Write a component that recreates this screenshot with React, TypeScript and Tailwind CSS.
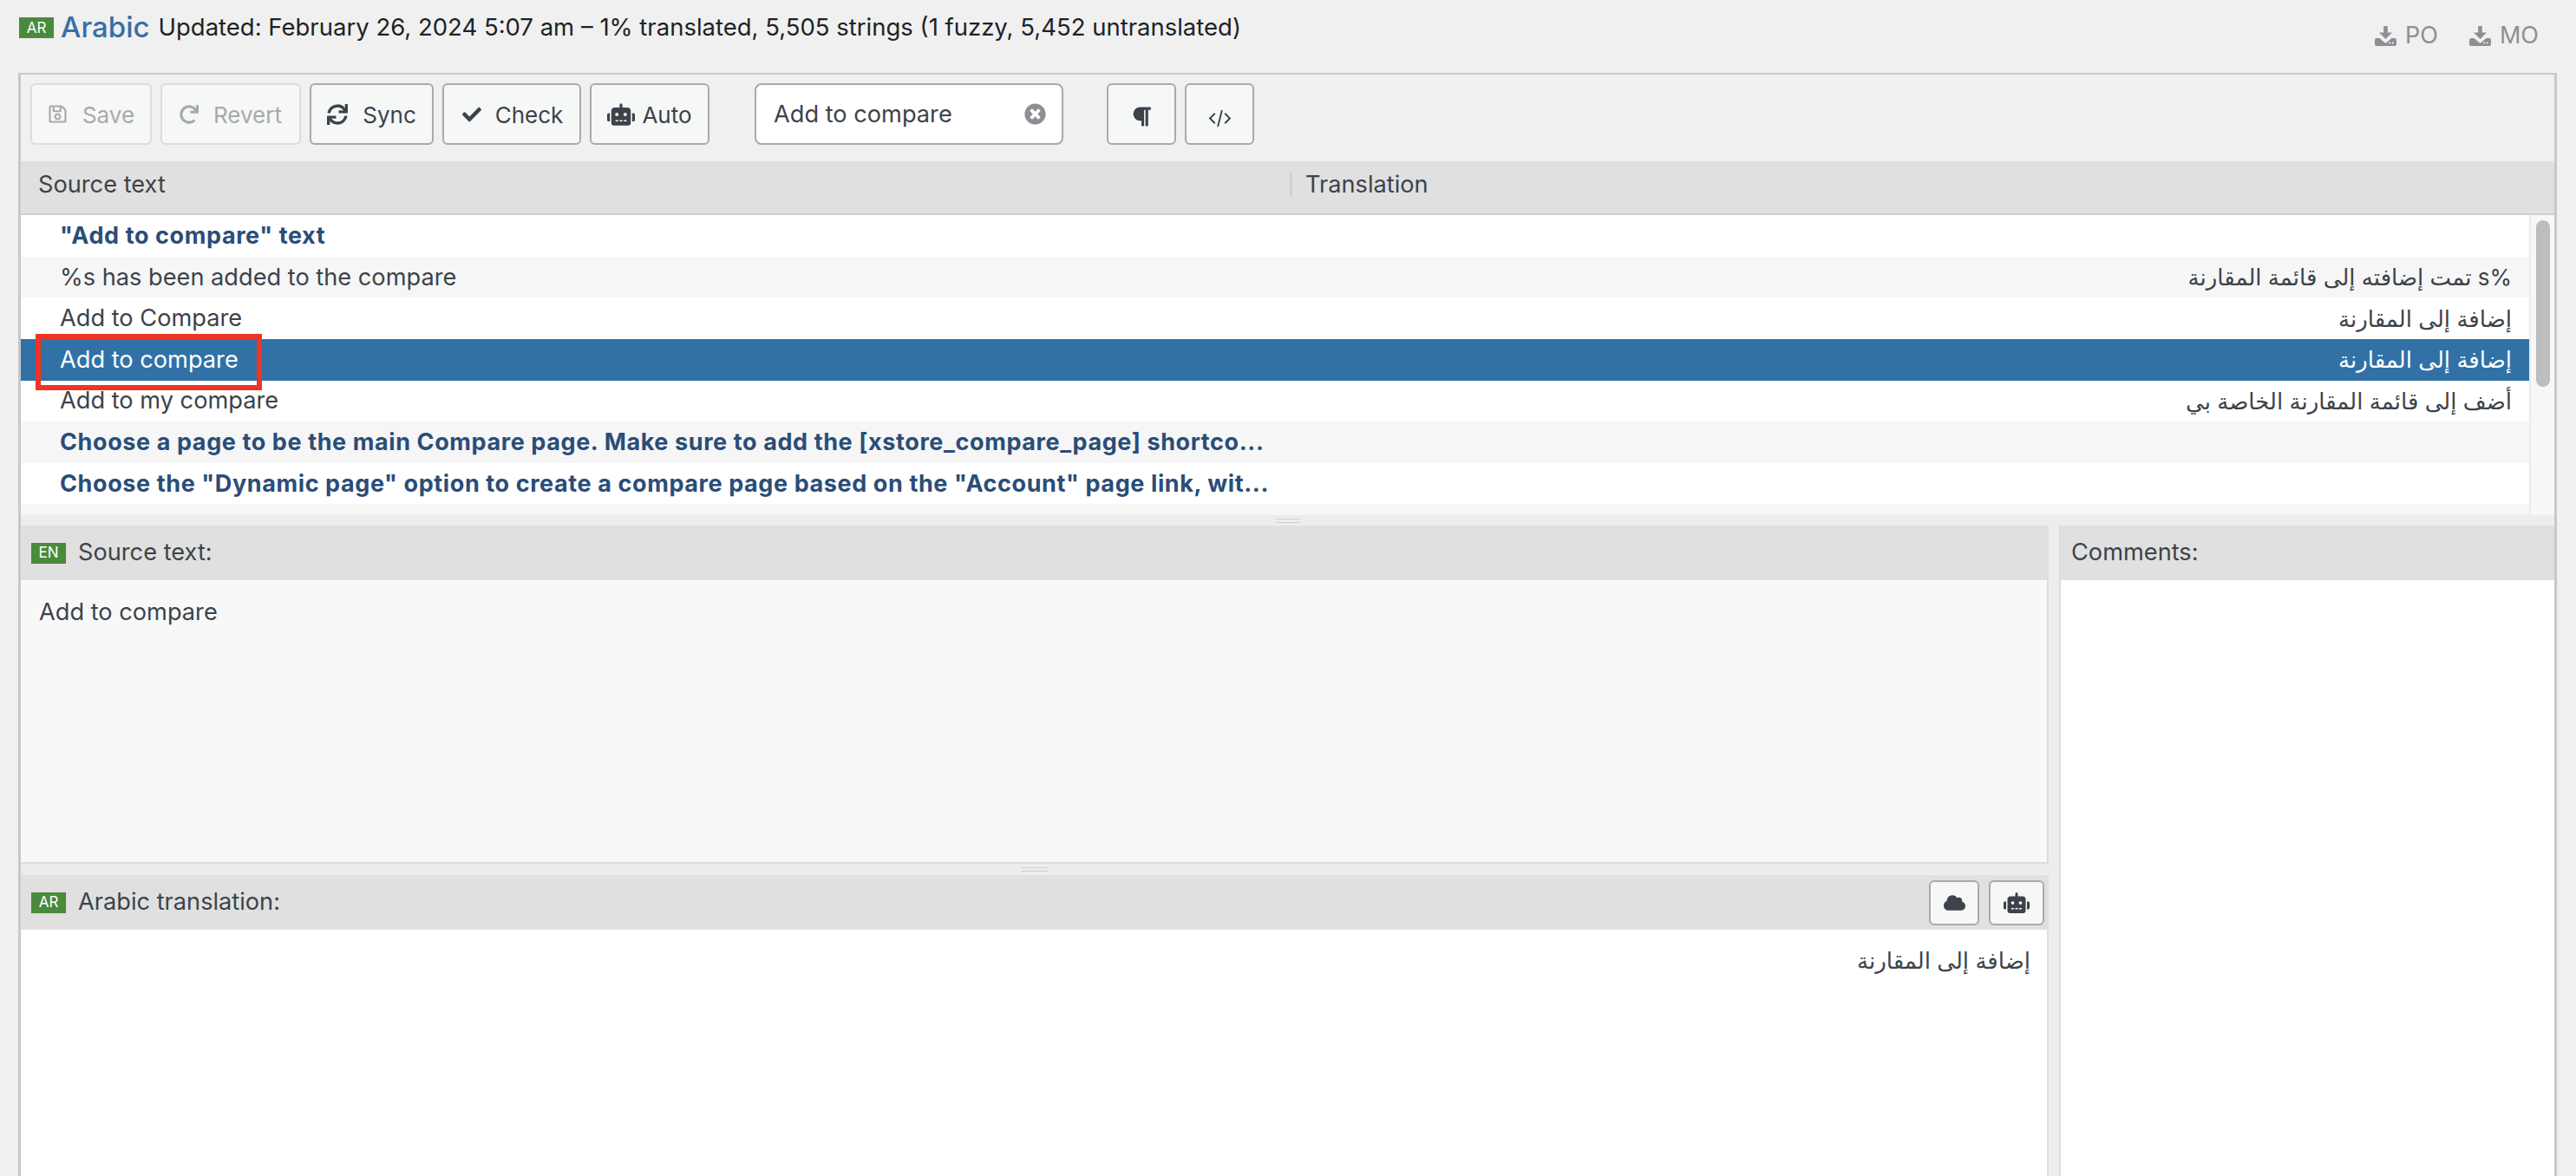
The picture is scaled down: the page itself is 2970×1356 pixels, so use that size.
import { FaRegSave, FaRedo, FaSync, FaCheck, FaRobot, FaParagraph, FaCloud, FaTimesCircle } from 'react-icons/fa';

const FONT = 'font-[Inter,"DejaVu_Sans",sans-serif]';

const rows = [
  { src: '"Add to compare" text', ar: '', bold: true },
  { src: '%s has been added to the compare', ar: '%s تمت إضافته إلى قائمة المقارنة' },
  { src: 'Add to Compare', ar: 'إضافة إلى المقارنة' },
  { src: 'Add to compare', ar: 'إضافة إلى المقارنة', active: true },
  { src: 'Add to my compare', ar: 'أضف إلى قائمة المقارنة الخاصة بي' },
  { src: 'Choose a page to be the main Compare page. Make sure to add the [xstore_compare_page] shortco...', ar: '', bold: true },
  { src: 'Choose the "Dynamic page" option to create a compare page based on the "Account" page link, wit...', ar: '', bold: true },
  { src: 'Choose whether to display the compare icon on the single product page and the product archives...', ar: '', bold: true },
];

function CodeIcon() {
  return (
    <svg viewBox="0 0 28 22" className="w-[27px] h-[21px] mt-[9px]" fill="none" stroke="currentColor" strokeWidth="2">
      <path d="M8 5 2 11l6 6M20 5l6 6-6 6M16.500 1l-5 20" />
    </svg>
  );
}

function DownloadIcon() {
  return (
    <svg viewBox="0 0 25 23" className="w-[25px] h-[23px]" fill="currentColor">
      <path d="M10.200 0h4.600v7.500h5.200l-7.500 7.500L5 7.500h5.200z" />
      <path fillRule="evenodd" d="M2 14h3.500l7 6 7-6H23a2 2 0 0 1 2 2v5a2 2 0 0 1-2 2H2a2 2 0 0 1-2-2v-5a2 2 0 0 1 2-2zm16 5.500a1 1 0 1 0 0 .01zm3.500 0a1 1 0 1 0 0 .01z" />
    </svg>
  );
}

function ToolButton({ icon, label, off, w, gap = 'gap-[17px]' }: any) {
  return (
    <button
      className={`${w} ${gap} h-[71px] shrink-0 flex items-center justify-center rounded-[6px] border-2 bg-[#f6f7f7] text-[26px] ${
        off ? 'border-[#dcdcde] text-[#a7aaad]' : 'border-[#a9a9a9] text-[#3c434a]'
      }`}
    >
      {icon}
      {label && <span className="mt-[2px]">{label}</span>}
    </button>
  );
}

function Badge({ code }: { code: string }) {
  return (
    <span className="w-[40px] h-[24px] shrink-0 flex items-center justify-center bg-[#4a8a3c] text-white text-[17px] leading-none">
      {code}
    </span>
  );
}

function PaneHeader({ badge, label, children }: any) {
  return (
    <div className="h-[63px] shrink-0 flex items-center bg-[#e0e0e0] pl-[12px] pr-[3px] text-[#3c434a] text-[27.200px]">
      {badge && <Badge code={badge} />}
      <span className={badge ? 'ml-[14px]' : ''}>{label}</span>
      {children}
    </div>
  );
}

function Row({ row, index }: any) {
  const bg = row.active ? 'bg-[#3171a6]' : index % 2 ? 'bg-[#f6f6f6]' : 'bg-white';
  const color = row.active ? 'text-white' : 'text-[#3c434a]';
  return (
    <div className={`relative h-[47.650px] shrink-0 flex items-center ${bg} ${color}`}>
      <div className={`w-[1464px] shrink-0 pl-[45px] pt-[1px] whitespace-nowrap text-[27.200px] ${row.bold ? 'font-bold text-[27px] tracking-[0.6px] text-[#2a4d78]' : ''}`}>
        {row.src}
      </div>
      <div dir="rtl" className="flex-1 pr-[20px] text-[26px]">
        {row.ar}
      </div>
      {row.active && (
        <div className="absolute z-10 left-[17px] top-[-6px] w-[261px] h-[65px] border-[6px] border-[#ee3524]" />
      )}
    </div>
  );
}

export default function App() {
  return (
    <div className={`w-[2970px] h-[1356px] overflow-hidden bg-[#f0f0f0] ${FONT}`}>
      <div className="h-[84px] flex pl-[22px] pr-[43px]">
        <div className="flex items-center h-[64px] text-[#1d2327] text-[27.500px]">
          <Badge code="AR" />
          <span className="ml-[8px] mr-[10px] text-[33px] text-[#3a6ea5] font-medium">Arabic</span>
          <span>Updated: February 26, 2024 5:07 am – 1% translated, 5,505 strings (1 fuzzy, 5,452 untranslated)</span>
        </div>
        <div className="ml-auto flex items-center gap-[36px] h-[82px] text-[#8c8f94] text-[27px]">
          <span className="flex items-center gap-[10px]"><DownloadIcon />PO</span>
          <span className="flex items-center gap-[10px]"><DownloadIcon />MO</span>
        </div>
      </div>

      <div className="ml-[21px] mr-[22px] h-[1272px] border-x-[3px] border-t-[2px] border-[#c8c8c8] flex flex-col">
        <div className="h-[100px] shrink-0 flex items-start pl-[11px] pt-[10px] gap-[10px]">
          <ToolButton off w="w-[140px]" label="Save" icon={<FaRegSave className="w-[23px] h-[23px]" />} />
          <ToolButton off w="w-[162px]" label="Revert" icon={<FaRedo className="w-[22px] h-[22px]" />} />
          <ToolButton w="w-[143px]" label="Sync" icon={<FaSync className="w-[24px] h-[24px]" />} />
          <ToolButton w="w-[160px]" gap="gap-[14px]" label="Check" icon={<FaCheck className="w-[26px] h-[22px]" />} />
          <ToolButton w="w-[138px]" gap="gap-[8px]" label="Auto" icon={<FaRobot className="w-[32px] h-[26px]" />} />
          <div className="ml-[42px] w-[356px] h-[71px] shrink-0 flex items-center justify-between rounded-[8px] border-2 border-[#a9a9a9] bg-white pl-[20px] pr-[18px] text-[27.200px] text-[#3c434a]">
            <span className="mt-[2px]">Add to compare</span>
            <FaTimesCircle className="w-[25px] h-[25px] text-[#8c8f94]" />
          </div>
          <div className="w-[30px]" />
          <ToolButton w="w-[80px]" icon={<FaParagraph className="w-[22px] h-[25px] mt-[5px]" />} />
          <ToolButton w="w-[80px]" icon={<CodeIcon />} />
        </div>

        <div className="h-[62px] shrink-0 flex items-center pb-[6px] bg-[#e0e0e0] border-b-2 border-[#cfcfcf] text-[#3c434a] text-[27.200px]">
          <div className="w-[1466px] shrink-0 flex items-center justify-between pl-[20px]">
            <span>Source text</span>
            <span className="w-[3px] h-[28px] border-x border-[#c8c8c8]" />
          </div>
          <span className="ml-[15px]">Translation</span>
        </div>

        <div className="h-[346px] shrink-0 flex overflow-hidden bg-[#f7f7f7]">
          <div className="w-[2892px] shrink-0 flex flex-col overflow-hidden">
            {rows.map((row, i) => <Row key={i} row={row} index={i} />)}
          </div>
          <div className="flex-1 bg-[#f7f7f7] border-l-2 border-[#ececec] pl-[6px] pt-[6px]">
            <div className="w-[16px] h-[192px] rounded-full bg-[#bdbdbd]" />
          </div>
        </div>

        <div className="h-[12px] shrink-0 flex items-center justify-center bg-[#ededed]">
          <span className="w-[30px] h-[5px] border-y border-[#cfcfcf]" />
        </div>

        <div className="flex-1 flex min-h-0">
          <div className="w-[2338px] shrink-0 flex flex-col">
            <PaneHeader badge="EN" label="Source text:" />
            <div className="h-[327px] shrink-0 bg-[#f8f8f8] border-b-2 border-r-2 border-[#dcdcdc] pl-[21px] pt-[17px] text-[27.200px] text-[#3c434a]">
              Add to compare
            </div>
            <div className="h-[13px] shrink-0 flex items-center justify-center bg-[#ededed]">
              <span className="w-[30px] h-[5px] border-y border-[#cfcfcf]" />
            </div>
            <PaneHeader badge="AR" label="Arabic translation:">
              <div className="ml-auto flex gap-[11px] pr-[2px]">
                <ToolButton w="w-[58px] !h-[52px]" icon={<FaCloud className="w-[25px] h-[20px]" />} />
                <ToolButton w="w-[64px] !h-[52px]" icon={<FaRobot className="w-[30px] h-[24px]" />} />
              </div>
            </PaneHeader>
            <div dir="rtl" className="flex-1 bg-white border-r-2 border-[#dcdcdc] pr-[19px] pt-[16px] text-[26px] text-[#3c434a]">
              إضافة إلى المقارنة
            </div>
          </div>
          <div className="w-[12px] shrink-0 bg-[#ededed]" />
          <div className="flex-1 flex flex-col border-l-2 border-[#dcdcdc]">
            <PaneHeader label="Comments:" />
            <div className="flex-1 bg-white" />
          </div>
        </div>
      </div>
    </div>
  );
}
